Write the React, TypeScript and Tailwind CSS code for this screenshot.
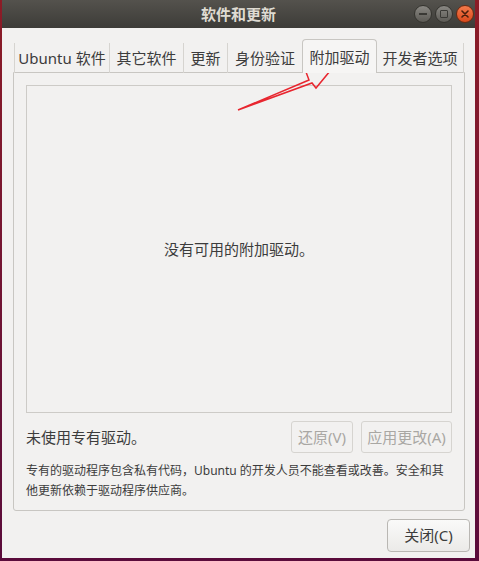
const font = { fontFamily: '"Noto Sans", "Noto Sans CJK SC", sans-serif' };

const tabs = [
  { label: "Ubuntu 软件", w: "w-[96px]" },
  { label: "其它软件", w: "w-[74px]" },
  { label: "更新", w: "w-[44px]" },
  { label: "身份验证", w: "w-[74px]" },
  { label: "附加驱动", w: "w-[75px]", active: true },
  { label: "开发者选项", w: "w-[87px]" },
];

const WindowButtons = () => (
  <div className="flex items-center gap-[3px] pr-[1px]">
    <div className="w-[18px] h-[18px] rounded-full bg-gradient-to-b from-[#8a8883] to-[#5c5a55] border border-[#35342f] flex items-center justify-center">
      <div className="w-[8px] h-[1.5px] bg-[#3a3935]" />
    </div>
    <div className="w-[18px] h-[18px] rounded-full bg-gradient-to-b from-[#8a8883] to-[#5c5a55] border border-[#35342f] flex items-center justify-center">
      <div className="w-[8px] h-[8px] border border-[#3a3935] rounded-[1px]" />
    </div>
    <div className="w-[18px] h-[18px] rounded-full bg-gradient-to-b from-[#f47a4a] to-[#d9481a] border border-[#6b2a12] flex items-center justify-center">
      <svg width="8" height="8" viewBox="0 0 8 8">
        <path d="M1 1 L7 7 M7 1 L1 7" stroke="#4a1e0c" strokeWidth="1.6" strokeLinecap="round" />
      </svg>
    </div>
  </div>
);

export default function App() {
  return (
    <div
      className="relative w-[479px] h-[561px] bg-gradient-to-b from-[#8c1c26] to-[#5a0b3b] pl-[2px] pr-[4px] pb-[3px] flex flex-col"
      style={font}
    >
      <div className="flex-1 bg-[#f2f1f0] flex flex-col text-[#3c3c3c]">
        {/* title bar */}
        <div className="relative h-[28px] bg-gradient-to-b from-[#54524d] to-[#3d3c38] flex items-center justify-end">
          <div className="absolute inset-0 flex items-center justify-center text-[15px] font-bold text-[#dfdbd2]">
            软件和更新
          </div>
          <WindowButtons />
        </div>

        <div className="pl-[11px] pr-[10px] pt-[12px] flex flex-col flex-1">
          {/* tabs */}
          <div className="flex items-end h-[33px] pl-[1px] relative z-10 -mb-[1px]">
            {tabs.map((t, i) =>
              t.active ? (
                <div
                  key={t.label}
                  className={`${t.w} h-[34px] bg-[#f6f5f4] border border-b-0 border-[#c8c6c2] rounded-t-[4px] flex items-center justify-center text-[15px] pt-[2px]`}
                >
                  {t.label}
                </div>
              ) : (
                <div
                  key={t.label}
                  className={`${t.w} h-[30px] flex items-center justify-center text-[15px] border-r border-[#d6d4d0] ${i === 0 ? "border-l" : ""} ${i === 3 ? "border-r-0" : ""}`}
                >
                  {t.label}
                </div>
              )
            )}
          </div>

          {/* panel */}
          <div className="h-[439px] border border-[#c8c6c2] rounded-b-[3px] p-[12px] pb-[9px] flex flex-col">
            <div className="flex-1 border border-[#cdcbc7] flex items-center justify-center text-[15px]">
              没有可用的附加驱动。
            </div>
            <div className="mt-[8px] h-[32px] flex items-center justify-between">
              <span className="text-[15px]">未使用专有驱动。</span>
              <div className="flex gap-[8px]">
                <div className="w-[62px] h-[32px] border border-[#d6d4d0] rounded-[3px] flex items-center justify-center text-[15px] text-[#a9a7a3]">
                  还原(V)
                </div>
                <div className="w-[91px] h-[32px] border border-[#d6d4d0] rounded-[3px] flex items-center justify-center text-[15px] text-[#a9a7a3]">
                  应用更改(A)
                </div>
              </div>
            </div>
            <p className="mt-[8px] text-[12px] leading-[20px]">
              专有的驱动程序包含私有代码，Ubuntu 的开发人员不能查看或改善。安全和其
              <br />
              他更新依赖于驱动程序供应商。
            </p>
          </div>

          {/* close */}
          <div className="flex justify-end mt-[8px] -mr-[5px]">
            <div className="w-[83px] h-[33px] border border-[#b9b7b3] rounded-[4px] bg-gradient-to-b from-[#fafaf9] to-[#ebeae8] flex items-center justify-center text-[15px]">
              关闭(C)
            </div>
          </div>
        </div>
      </div>

      {/* red annotation arrow */}
      <svg className="absolute left-0 top-0 pointer-events-none" width="479" height="561">
        <polygon
          points="238,110 309,80 306,72 330,71 316,88 312,83 238,110"
          fill="none"
          stroke="#e8262f"
          strokeWidth="1.5"
          strokeLinejoin="miter"
        />
      </svg>
    </div>
  );
}
